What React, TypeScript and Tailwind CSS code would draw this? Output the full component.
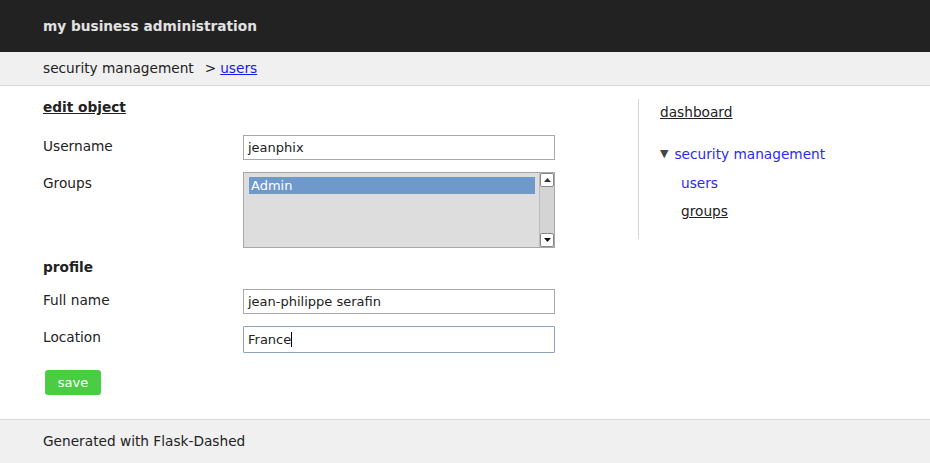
export default function App() {
  return (
    <div className="min-h-[463px] flex flex-col bg-white text-[13.7px] text-[#222]" style={{ fontFamily: '"DejaVu Sans", Verdana, sans-serif' }}>
      {/* Top bar */}
      <div className="h-[52px] bg-[#222] px-[43px] flex items-center">
        <span className="font-bold text-[#e2e2e2] leading-[20px]">my business administration</span>
      </div>

      {/* Breadcrumb */}
      <div className="h-[34px] bg-[#f0f0f0] border-b border-[#d6d6d6] px-[43px] flex items-center">
        <span>security management</span>
        <span className="ml-[11px]">&gt;</span>
        <a href="#" className="ml-[4px] text-[#1a1aee] underline">users</a>
      </div>

      {/* Main */}
      <div className="flex flex-1">
        <div className="ml-[43px] w-[595px] pt-[11px]">
          <h2 className="font-bold underline leading-[20px]">edit object</h2>

          <div className="flex mt-[18px]">
            <label className="w-[200px] pt-[1px] leading-[20px]">Username</label>
            <div className="w-[312px] h-[25px] border border-[#aaa] bg-white flex items-center px-[4px] text-[13px]">jeanphix</div>
          </div>

          <div className="flex mt-[12px]">
            <label className="w-[200px] pt-[1px] leading-[20px]">Groups</label>
            <div className="w-[312px] h-[76px] border border-[#a8a8a8] bg-[#dddddd] flex">
              <div className="flex-1 pt-[4px] pl-[5px] pr-[4px]">
                <div className="bg-[#7099cb] text-white text-[13px] leading-[17px] pl-[2px]">Admin</div>
              </div>
              <div className="w-[15px] flex flex-col border-l border-[#bbb] bg-[#d4d4d4]">
                <div className="h-[14px] bg-white border border-[#888] rounded-[2px] flex items-center justify-center">
                  <svg width="7" height="4" viewBox="0 0 7 4"><path d="M0 4 L3.5 0 L7 4 Z" fill="#333" /></svg>
                </div>
                <div className="flex-1" />
                <div className="h-[14px] bg-white border border-[#888] rounded-[2px] flex items-center justify-center">
                  <svg width="7" height="4" viewBox="0 0 7 4"><path d="M0 0 L3.5 4 L7 0 Z" fill="#111" /></svg>
                </div>
              </div>
            </div>
          </div>

          <h3 className="font-bold leading-[20px] mt-[9px]">profile</h3>

          <div className="flex mt-[12px]">
            <label className="w-[200px] pt-[1px] leading-[20px]">Full name</label>
            <div className="w-[312px] h-[25px] border border-[#aaa] bg-white flex items-center px-[4px] text-[13px]">jean-philippe serafin</div>
          </div>

          <div className="flex mt-[12px]">
            <label className="w-[200px] pt-[1px] leading-[20px]">Location</label>
            <div className="w-[312px] h-[27px] border border-[#8fa3bd] rounded-[1px] bg-white flex items-center px-[4px] text-[13px]">
              France<span className="inline-block w-px h-[15px] bg-black" />
            </div>
          </div>

          <button className="mt-[17px] ml-[2px] w-[56px] h-[25px] rounded-[3px] bg-[#4ccc44] text-white text-[13px] leading-[25px]">save</button>
        </div>

        {/* Sidebar */}
        <div className="self-start mt-[13px] border-l border-[#d6d6d6] pl-[21px] pt-[3px] pb-[18px] w-[260px]">
          <a href="#" className="block underline text-[#222] leading-[20px]">dashboard</a>
          <div className="mt-[22px] flex items-center leading-[20px] text-[#2b2bf0]">
            <span className="text-[#444] text-[11px] mr-[6px]">▼</span>
            <span>security management</span>
          </div>
          <a href="#" className="block mt-[9px] ml-[21px] text-[#2b2bf0] leading-[20px]">users</a>
          <a href="#" className="block mt-[8px] ml-[21px] underline text-[#222] leading-[20px]">groups</a>
        </div>
      </div>

      {/* Footer */}
      <div className="h-[44px] bg-[#f0f0f0] border-t border-[#d6d6d6] px-[43px] flex items-center">
        Generated with Flask-Dashed
      </div>
    </div>
  );
}
